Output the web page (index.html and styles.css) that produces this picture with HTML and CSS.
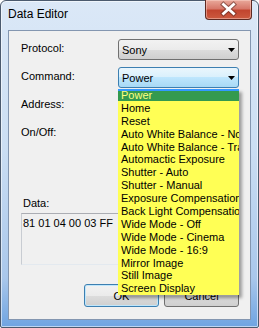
FILE: index.html
```html
<!DOCTYPE html>
<html lang="en">
<head>
  <meta charset="UTF-8" />
  <title>Data Editor</title>
  <link rel="stylesheet" href="styles.css">
</head>
<body>
  <div class="window">
    <div class="titlebar">
      <span class="title">Data Editor</span>
      <div class="close-btn">
        <svg width="47" height="20" viewBox="0 0 47 20">
          <path d="M18.5 5.5 L28.5 14.5 M28.5 5.5 L18.5 14.5" stroke="#5b2b22" stroke-width="5" stroke-linecap="square" opacity="0.55" fill="none"/>
          <path d="M18.5 5.5 L28.5 14.5 M28.5 5.5 L18.5 14.5" stroke="#fff" stroke-width="2.8" stroke-linecap="square" fill="none"/>
        </svg>
      </div>
    </div>

    <div class="client">
      <div class="fields">
        <label>Protocol:</label>
        <div class="combo">
          <span>Sony</span>
          <svg class="arrow" width="7" height="4" viewBox="0 0 7 4"><polygon points="0,0 7,0 3.5,4" fill="#000"/></svg>
        </div>

        <label>Command:</label>
        <div class="combo combo-hot">
          <span>Power</span>
          <svg class="arrow" width="7" height="4" viewBox="0 0 7 4"><polygon points="0,0 7,0 3.5,4" fill="#000"/></svg>
        </div>

        <label>Address:</label>
        <div></div>

        <label>On/Off:</label>
        <div></div>
      </div>

      <div class="data-group">
        <div class="data-label">Data:</div>
        <div class="data-box">81 01 04 00 03 FF</div>
      </div>

      <div class="buttons">
        <button class="btn btn-default">OK</button>
        <button class="btn">Cancel</button>
      </div>

      <ul class="dropdown">
        <li class="selected">Power</li>
        <li>Home</li>
        <li>Reset</li>
        <li>Auto White Balance - Normal</li>
        <li>Auto White Balance - Tracking</li>
        <li>Automactic Exposure</li>
        <li>Shutter - Auto</li>
        <li>Shutter - Manual</li>
        <li>Exposure Compensation</li>
        <li>Back Light Compensation</li>
        <li>Wide Mode - Off</li>
        <li>Wide Mode - Cinema</li>
        <li>Wide Mode - 16:9</li>
        <li>Mirror Image</li>
        <li>Still Image</li>
        <li>Screen Display</li>
      </ul>
    </div>
  </div>
</body>
</html>
```

FILE: styles.css
```css
body {
  margin: 0;
  font-family: 'Liberation Sans', Arial, sans-serif;
  font-size: 11px;
  color: #000;
  background: #fff;
}

.window {
  width: 259px;
  height: 328px;
  box-sizing: border-box;
  border: 1px solid #4b5a6e;
  border-radius: 6px 6px 2px 2px;
  padding: 0 7px 7px 7px;
  background: linear-gradient(to bottom, #dbe8f7 0%, #cbdef3 45%, #a9c7eb 85%, #6fa4e1 100%);
  box-shadow: inset 0 0 0 1px rgba(255, 255, 255, 0.55);
  display: flex;
  flex-direction: column;
}

.titlebar {
  height: 29px;
  display: flex;
  justify-content: space-between;
  align-items: flex-start;
}

.title {
  margin-top: 6px;
  font-size: 12px;
  line-height: 15px;
  color: #000;
}

.close-btn {
  width: 47px;
  height: 20px;
  margin-top: -1px;
  margin-right: -1px;
  box-sizing: border-box;
  border: 1px solid #5e2a22;
  border-top: none;
  border-radius: 0 0 4px 4px;
  background: linear-gradient(to bottom, #e9a99b 0%, #d7786a 45%, #c2452f 55%, #cc5a3f 100%);
  box-shadow: inset 0 0 0 1px rgba(255, 220, 210, 0.45);
  overflow: hidden;
}

.close-btn svg {
  display: block;
  margin: -1px 0 0 -1px;
}

.client {
  flex: 1;
  position: relative;
  background: #f0f0f0;
  border: 1px solid #8396b0;
}

.fields {
  display: grid;
  grid-template-columns: 97px 121px;
  grid-auto-rows: 21px;
  row-gap: 7px;
  padding: 8px 0 0 12px;
}

.fields label {
  padding-top: 3px;
  line-height: 13px;
}

.combo {
  box-sizing: border-box;
  height: 21px;
  border: 1px solid #707070;
  border-radius: 3px;
  background: linear-gradient(to bottom, #f2f2f2 0%, #ebebeb 50%, #dddddd 50%, #cfcfcf 100%);
  display: flex;
  align-items: center;
  justify-content: space-between;
  padding: 0 3px 0 3px;
  font-size: 11px;
}

.combo-hot {
  border-color: #3c7fb1;
  background: linear-gradient(to bottom, #eaf6fd 0%, #d9f0fc 50%, #bee6fd 50%, #a7d9f5 100%);
}

.arrow {
  display: block;
  margin-top: 1px;
}

.data-group {
  margin-top: 53px;
}

.data-label {
  padding-left: 14px;
  line-height: 13px;
}

.data-box {
  margin: 3px 0 0 12px;
  width: 218px;
  height: 52px;
  box-sizing: border-box;
  padding: 3px 1px;
  line-height: 13px;
  border: 1px solid #e3e9ef;
  border-top-color: #abadb3;
  border-left-color: #c8ccd2;
  background: #f0f0f0;
}

.buttons {
  display: flex;
  justify-content: flex-end;
  gap: 5px;
  margin-top: 19px;
  padding-right: 11px;
}

.btn {
  width: 75px;
  height: 23px;
  border: 1px solid #707070;
  border-radius: 3px;
  background: linear-gradient(to bottom, #f2f2f2 0%, #ebebeb 50%, #dddddd 50%, #cfcfcf 100%);
  font-family: inherit;
  font-size: 11px;
  color: #000;
  padding: 0;
}

.btn-default {
  border-color: #3c7fb1;
  box-shadow: inset 0 0 0 1px #bfe6fb;
}

.dropdown {
  position: absolute;
  left: 109px;
  top: 58px;
  width: 121px;
  margin: 0;
  padding: 0;
  list-style: none;
  background: #ffff55;
  box-shadow: 3px 3px 3px rgba(0, 0, 0, 0.35);
  font-size: 11px;
}

.dropdown li {
  height: 12.9px;
  line-height: 13px;
  padding-left: 3px;
  white-space: nowrap;
  overflow: hidden;
}

.dropdown li.selected {
  color: #ffff80;
  background: linear-gradient(to bottom, #3399ff 0, #3399ff 2px, #349a4e 2px, #349a4e 12px, transparent 12px);
}
```
